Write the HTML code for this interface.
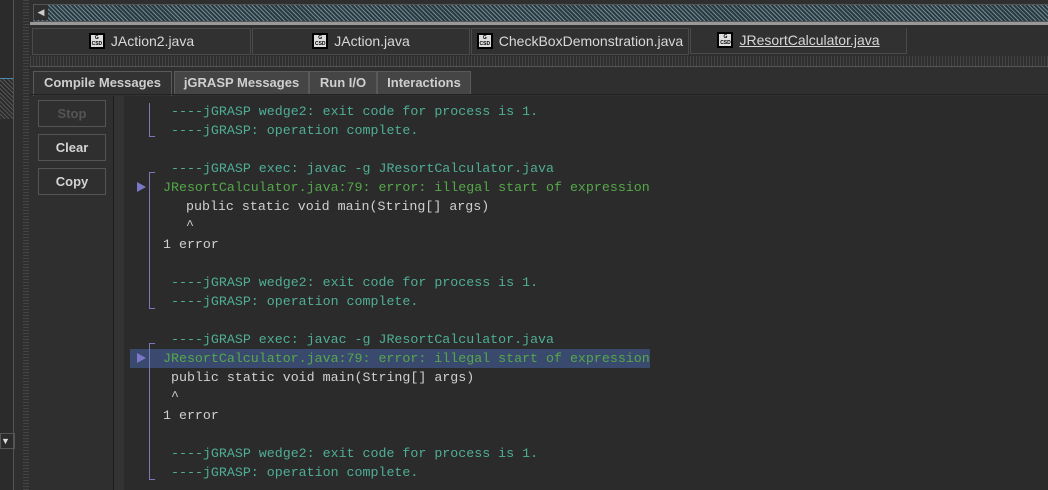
<!DOCTYPE html>
<html><head><style>
body{margin:0;width:1048px;height:490px;background:#2f2f2f;overflow:hidden;position:relative;font-family:"Liberation Sans",sans-serif}
.a{position:absolute}
.tab{position:absolute;top:28px;height:25px;border:1px solid #4a4a4a;color:#d8d8d8;font-size:14px;line-height:25px;text-align:center;background:#313131;white-space:nowrap;overflow:hidden}
.ic{display:inline-block;width:12px;height:12px;background:#ddd;border:2px solid #000;vertical-align:-3px;margin-right:6px;font-size:5px;line-height:6px;color:#000;text-align:center;overflow:hidden;font-weight:bold}
.mt{position:absolute;top:71px;height:22px;border:1px solid #5a5a5a;border-bottom:none;background:#454545;color:#cfcfcf;font-weight:bold;font-size:13px;line-height:22px;text-align:center;white-space:nowrap}
.btn{position:absolute;left:38px;width:66px;height:25px;border:1px solid #555;color:#d4d4d4;font-weight:bold;font-size:13px;line-height:25px;text-align:center}
.ln{position:absolute;font-family:"Liberation Mono",monospace;font-size:13.3px;white-space:pre;line-height:19px;margin-top:1px}
.t{color:#4fae95}.g{color:#55a84a}.w{color:#d0d0d0}
.br{position:absolute;left:149px;width:5px;border:1px solid #7b78b8;border-right:none}
.ar{position:absolute;left:137px;width:0;height:0;border-left:9px solid #7b78c8;border-top:5px solid transparent;border-bottom:5px solid transparent}
</style></head><body>
<div class="a" style="left:0;top:0;width:13px;height:490px;background:#2b2b2b;border-right:1px solid #555"></div>
<div class="a" style="left:0;top:78px;width:13px;height:40px;background:repeating-linear-gradient(45deg,#555 0 1px,#2b2b2b 1px 3px);border-top:1px solid #4a8ab0"></div>
<div class="a" style="left:0;top:433px;width:13px;height:14px;border:1px solid #555;color:#ddd;font-size:9px;line-height:14px">▼</div>
<div class="a" style="left:23px;top:0;width:6px;height:490px;background:repeating-linear-gradient(#444 0 1px,#2f2f2f 1px 3px)"></div>
<div class="a" style="left:33px;top:4px;width:1015px;height:16px;background:repeating-linear-gradient(45deg,#6b8a96 0 1px,#2c3a40 1px 3px);border:1px solid #555"></div>
<div class="a" style="left:34px;top:5px;width:14px;height:15px;background:#2f2f2f;color:#ccc;font-size:9px;line-height:15px;text-align:center">◀</div>
<div class="a" style="left:30px;top:22px;width:1018px;height:3px;background:#999"></div>
<div class="tab" style="left:32px;width:217px"><span class="ic">G<br>CSD</span>JAction2.java</div>
<div class="tab" style="left:252px;width:216px"><span class="ic">G<br>CSD</span>JAction.java</div>
<div class="tab" style="left:471px;width:216px"><span class="ic">G<br>CSD</span>CheckBoxDemonstration.java</div>
<div class="tab" style="left:690px;width:215px;border-top:none"><span class="ic">G<br>CSD</span><u>JResortCalculator.java</u></div>
<div class="a" style="left:30px;top:56px;width:1018px;height:10px;border-bottom:1px solid #555;background:repeating-linear-gradient(90deg,#444 0 1px,transparent 1px 3px)"></div>
<div class="mt" style="left:33px;width:137px;background:#333;height:24px">Compile Messages</div>
<div class="mt" style="left:174px;width:133px">jGRASP Messages</div>
<div class="mt" style="left:309px;width:66px">Run I/O</div>
<div class="mt" style="left:377px;width:92px">Interactions</div>
<div class="a" style="left:30px;top:94px;width:1018px;height:1px;background:#222"></div>
<div class="btn" style="top:100px;color:#555">Stop</div>
<div class="btn" style="top:134px">Clear</div>
<div class="btn" style="top:168px">Copy</div>
<div class="a" style="left:113px;top:96px;width:935px;height:394px;background:#2b2b2b;border-left:1px solid #1e1e1e"></div>
<div class="a" style="left:114px;top:96px;width:10px;height:394px;background:#333"></div>
<div class="a" style="left:130px;top:349px;width:520px;height:19px;background:#3a4a6e"></div>
<div class="br" style="top:103px;height:33px;border-top:none"></div>
<div class="br" style="top:172px;height:135px"></div>
<div class="br" style="top:343px;height:135px"></div>
<div class="ar" style="top:182px"></div>
<div class="ar" style="top:353px"></div>
<div class="ln t" style="left:171px;top:101px">----jGRASP wedge2: exit code for process is 1.</div>
<div class="ln t" style="left:171px;top:120px">----jGRASP: operation complete.</div>
<div class="ln t" style="left:171px;top:158px">----jGRASP exec: javac -g JResortCalculator.java</div>
<div class="ln g" style="left:163px;top:177px">JResortCalculator.java:79: error: illegal start of expression</div>
<div class="ln w" style="left:186px;top:196px">public static void main(String[] args)</div>
<div class="ln w" style="left:186px;top:215px">^</div>
<div class="ln w" style="left:163px;top:234px">1 error</div>
<div class="ln t" style="left:171px;top:272px">----jGRASP wedge2: exit code for process is 1.</div>
<div class="ln t" style="left:171px;top:291px">----jGRASP: operation complete.</div>
<div class="ln t" style="left:171px;top:329px">----jGRASP exec: javac -g JResortCalculator.java</div>
<div class="ln g" style="left:163px;top:348px">JResortCalculator.java:79: error: illegal start of expression</div>
<div class="ln w" style="left:171px;top:367px">public static void main(String[] args)</div>
<div class="ln w" style="left:171px;top:386px">^</div>
<div class="ln w" style="left:163px;top:405px">1 error</div>
<div class="ln t" style="left:171px;top:443px">----jGRASP wedge2: exit code for process is 1.</div>
<div class="ln t" style="left:171px;top:462px">----jGRASP: operation complete.</div>
</body></html>
